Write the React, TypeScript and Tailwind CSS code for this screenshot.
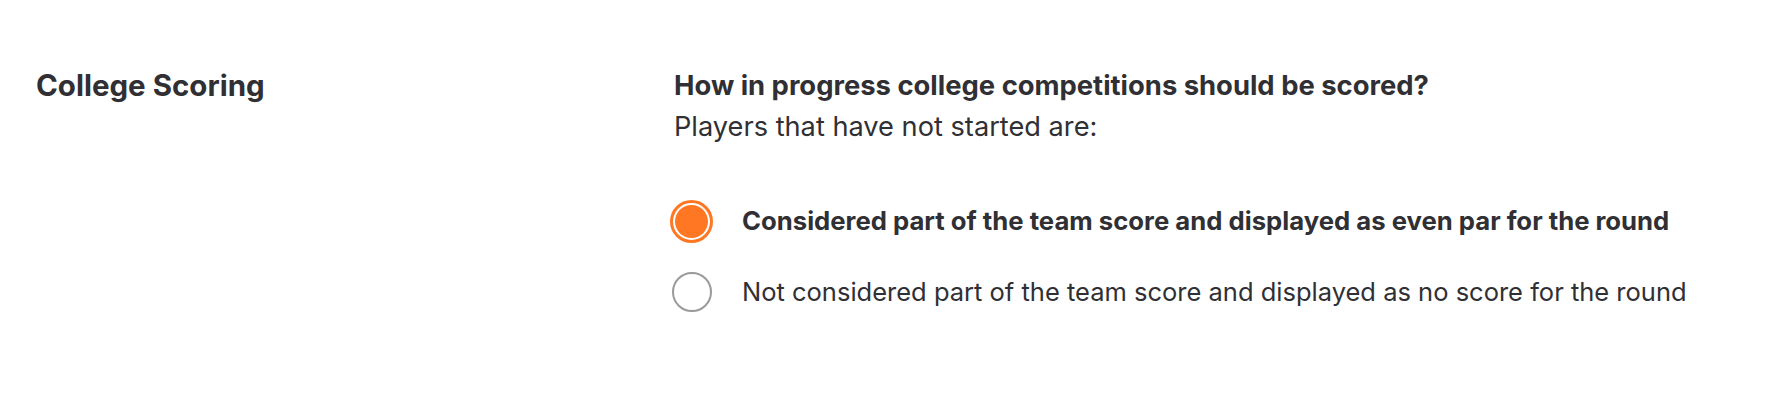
import React from "react";

export default function App() {
  return (
    <div
      className="w-[1776px] h-[400px] bg-white text-[#303034]"
      style={{ fontFamily: "Inter, 'Noto Sans', 'Liberation Sans', sans-serif" }}
    >
      <div className="flex items-start pt-[64px] pl-[36px]">
        <div className="w-[640px] shrink-0 text-[29.5px] leading-[42px] font-bold">College Scoring</div>
        <div className="flex flex-col -ml-[2px]">
          <div className="text-[27.4px] leading-[42px] font-bold">
            How in progress college competitions should be scored?
          </div>
          <div className="text-[27.2px] leading-[42px] font-normal">Players that have not started are:</div>
          <div className="mt-[52px] flex flex-col gap-[29px] -ml-[4px]">
            <label className="flex items-center h-[42px] gap-[29px]">
              <span className="w-[43px] h-[43px] shrink-0 rounded-full border-[3px] border-[#ff7722] p-[2px] bg-white">
                <span className="block w-full h-full rounded-full bg-[#ff7722]" />
              </span>
              <span className="text-[25.7px] font-bold">
                Considered part of the team score and displayed as even par for the round
              </span>
            </label>
            <label className="flex items-center h-[42px] gap-[29px]">
              <span className="w-[43px] h-[42px] shrink-0 flex items-center justify-center">
                <span className="block w-[40px] h-[40px] rounded-full border-2 border-[#9a9a9a] bg-white" />
              </span>
              <span className="text-[25.5px] font-normal">
                Not considered part of the team score and displayed as no score for the round
              </span>
            </label>
          </div>
        </div>
      </div>
    </div>
  );
}
